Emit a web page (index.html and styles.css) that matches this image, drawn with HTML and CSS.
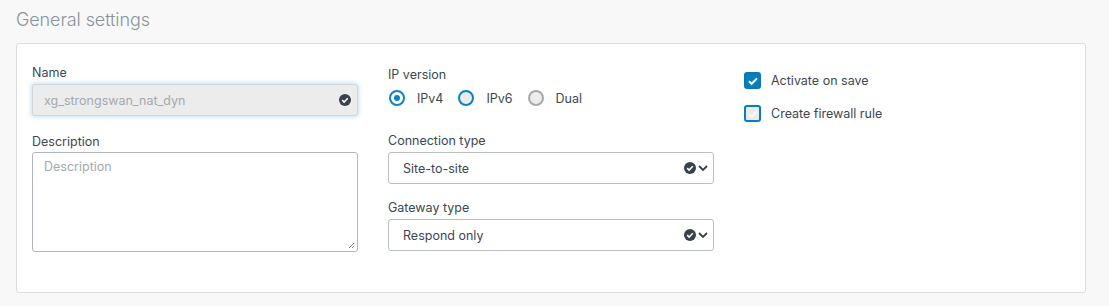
FILE: index.html
```html
<!DOCTYPE html>
<html>
<head>
<meta charset="utf-8">
<link rel="stylesheet" href="styles.css">
</head>
<body>
<h2 class="title">General settings</h2>
<div class="card">
  <div class="col">
    <div class="field">
      <label class="label">Name</label>
      <div class="input input-disabled">
        <span class="value muted">xg_strongswan_nat_dyn</span>
        <svg class="ok" viewBox="0 0 12 12" width="12" height="12"><circle cx="6" cy="6" r="6" fill="#38424c"/><path d="M3.2 6.1l1.9 1.9 3.7-3.7" stroke="#fff" stroke-width="1.6" fill="none"/></svg>
      </div>
    </div>
    <div class="field field-desc">
      <label class="label">Description</label>
      <div class="textarea">
        <span class="muted">Description</span>
        <svg class="grip" viewBox="0 0 8 8" width="8" height="8"><path d="M7 2L2 7M7 5L5 7" stroke="#777" stroke-width="0.9"/></svg>
      </div>
    </div>
  </div>
  <div class="col col-mid">
    <div class="field">
      <label class="label">IP version</label>
      <div class="radios">
        <span class="radio on"></span><span class="rtext">IPv4</span>
        <span class="radio blue"></span><span class="rtext">IPv6</span>
        <span class="radio grey"></span><span class="rtext">Dual</span>
      </div>
    </div>
    <div class="field field-conn">
      <label class="label">Connection type</label>
      <div class="input select">
        <span class="value">Site-to-site</span>
        <svg class="ok" viewBox="0 0 12 12" width="12" height="12"><circle cx="6" cy="6" r="6" fill="#38424c"/><path d="M3.2 6.1l1.9 1.9 3.7-3.7" stroke="#fff" stroke-width="1.6" fill="none"/></svg>
        <svg class="chev" viewBox="0 0 10 6" width="10" height="6"><path d="M1 1l4 4 4-4" stroke="#38424c" stroke-width="1.8" fill="none"/></svg>
      </div>
    </div>
    <div class="field field-gw">
      <label class="label">Gateway type</label>
      <div class="input select">
        <span class="value">Respond only</span>
        <svg class="ok" viewBox="0 0 12 12" width="12" height="12"><circle cx="6" cy="6" r="6" fill="#38424c"/><path d="M3.2 6.1l1.9 1.9 3.7-3.7" stroke="#fff" stroke-width="1.6" fill="none"/></svg>
        <svg class="chev" viewBox="0 0 10 6" width="10" height="6"><path d="M1 1l4 4 4-4" stroke="#38424c" stroke-width="1.8" fill="none"/></svg>
      </div>
    </div>
  </div>
  <div class="col col-right">
    <div class="check-row">
      <span class="checkbox checked"><svg viewBox="0 0 12 12" width="12" height="12"><path d="M2 6.3l2.6 2.5 5.4-5.4" stroke="#fff" stroke-width="2" fill="none"/></svg></span>
      <span class="ctext">Activate on save</span>
    </div>
    <div class="check-row">
      <span class="checkbox"><svg viewBox="0 0 12 12" width="12" height="12"><path d="M2 6.3l2.6 2.5 5.4-5.4" stroke="#fafafa" stroke-width="2" fill="none"/></svg></span>
      <span class="ctext">Create firewall rule</span>
    </div>
  </div>
</div>
</body>
</html>
```

FILE: styles.css
```css
html, body {
  margin: 0;
  padding: 0;
  background: #f8f8f8;
  font-family: Inter, "Noto Sans", sans-serif;
  color: #3c4751;
}
body {
  padding: 9px 23px 0 16px;
}
.title {
  margin: 0 0 12px 0;
  font-size: 18px;
  font-weight: 300;
  line-height: 22px;
  color: #8a939b;
  letter-spacing: -0.1px;
}
.card {
  background: #fff;
  border: 1px solid #dcdcdc;
  border-radius: 3px;
  height: 250px;
  box-sizing: border-box;
  padding: 21px 15px 0 15px;
  display: flex;
  gap: 30px;
}
.col {
  width: 326px;
  display: flex;
  flex-direction: column;
}
.col-right {
  padding-top: 7px;
}
.field {
  display: flex;
  flex-direction: column;
}
.label {
  font-size: 12.5px;
  line-height: 16px;
  color: #3c4751;
  margin-bottom: 3px;
}
.field-desc {
  margin-top: 18px;
}
.field-desc .label {
  margin-bottom: 2px;
}
.col-mid {
  padding-top: 2px;
}
.input {
  height: 32px;
  box-sizing: border-box;
  border: 1px solid #b9bec2;
  border-radius: 3px;
  display: flex;
  align-items: center;
  padding: 0 5px 0 14px;
  font-size: 12.5px;
}
.input .value {
  flex: 1;
}
.input-disabled {
  background: #ececec;
  border-color: #d0d6da;
  box-shadow: 0 0 4px 1px rgba(90, 170, 230, 0.35);
  padding-left: 11px;
}
.muted {
  color: #a5a9ad;
}
.ok {
  margin-right: 1px;
}
.select .ok {
  margin-right: 2px;
}
.textarea {
  position: relative;
  height: 100px;
  box-sizing: border-box;
  border: 1px solid #b1b6ba;
  border-radius: 3px;
  padding: 6px 11px;
  font-size: 12.5px;
  line-height: 16px;
}
.grip {
  position: absolute;
  right: 2px;
  bottom: 2px;
}
.radios {
  display: flex;
  align-items: center;
  height: 18px;
  margin-top: 3px;
}
.radio {
  width: 16px;
  height: 16px;
  box-sizing: border-box;
  border-radius: 50%;
  border: 2px solid #0b83c4;
  background: #ececec;
  margin-left: 1px;
  margin-right: 12px;
  position: relative;
}
.radio.on {
  background: #fff;
}
.radio.on::after {
  content: "";
  position: absolute;
  left: 3px;
  top: 3px;
  width: 6px;
  height: 6px;
  border-radius: 50%;
  background: #0b83c4;
}
.radio.grey {
  border-color: #a9a9a9;
}
.rtext {
  font-size: 12.5px;
  margin-right: 14px;
}
.field-conn {
  margin-top: 26px;
}
.field-gw {
  margin-top: 16px;
}
.check-row {
  display: flex;
  align-items: center;
  height: 17px;
  margin-bottom: 16px;
}
.checkbox {
  width: 17px;
  height: 17px;
  box-sizing: border-box;
  border-radius: 3px;
  border: 2px solid #0a7fbe;
  background: #ebebeb;
  display: flex;
  align-items: center;
  justify-content: center;
  margin-right: 10px;
}
.checkbox.checked {
  background: #0a7fbe;
  border-color: #0a78b5;
}
.ctext {
  font-size: 12.5px;
}
```
